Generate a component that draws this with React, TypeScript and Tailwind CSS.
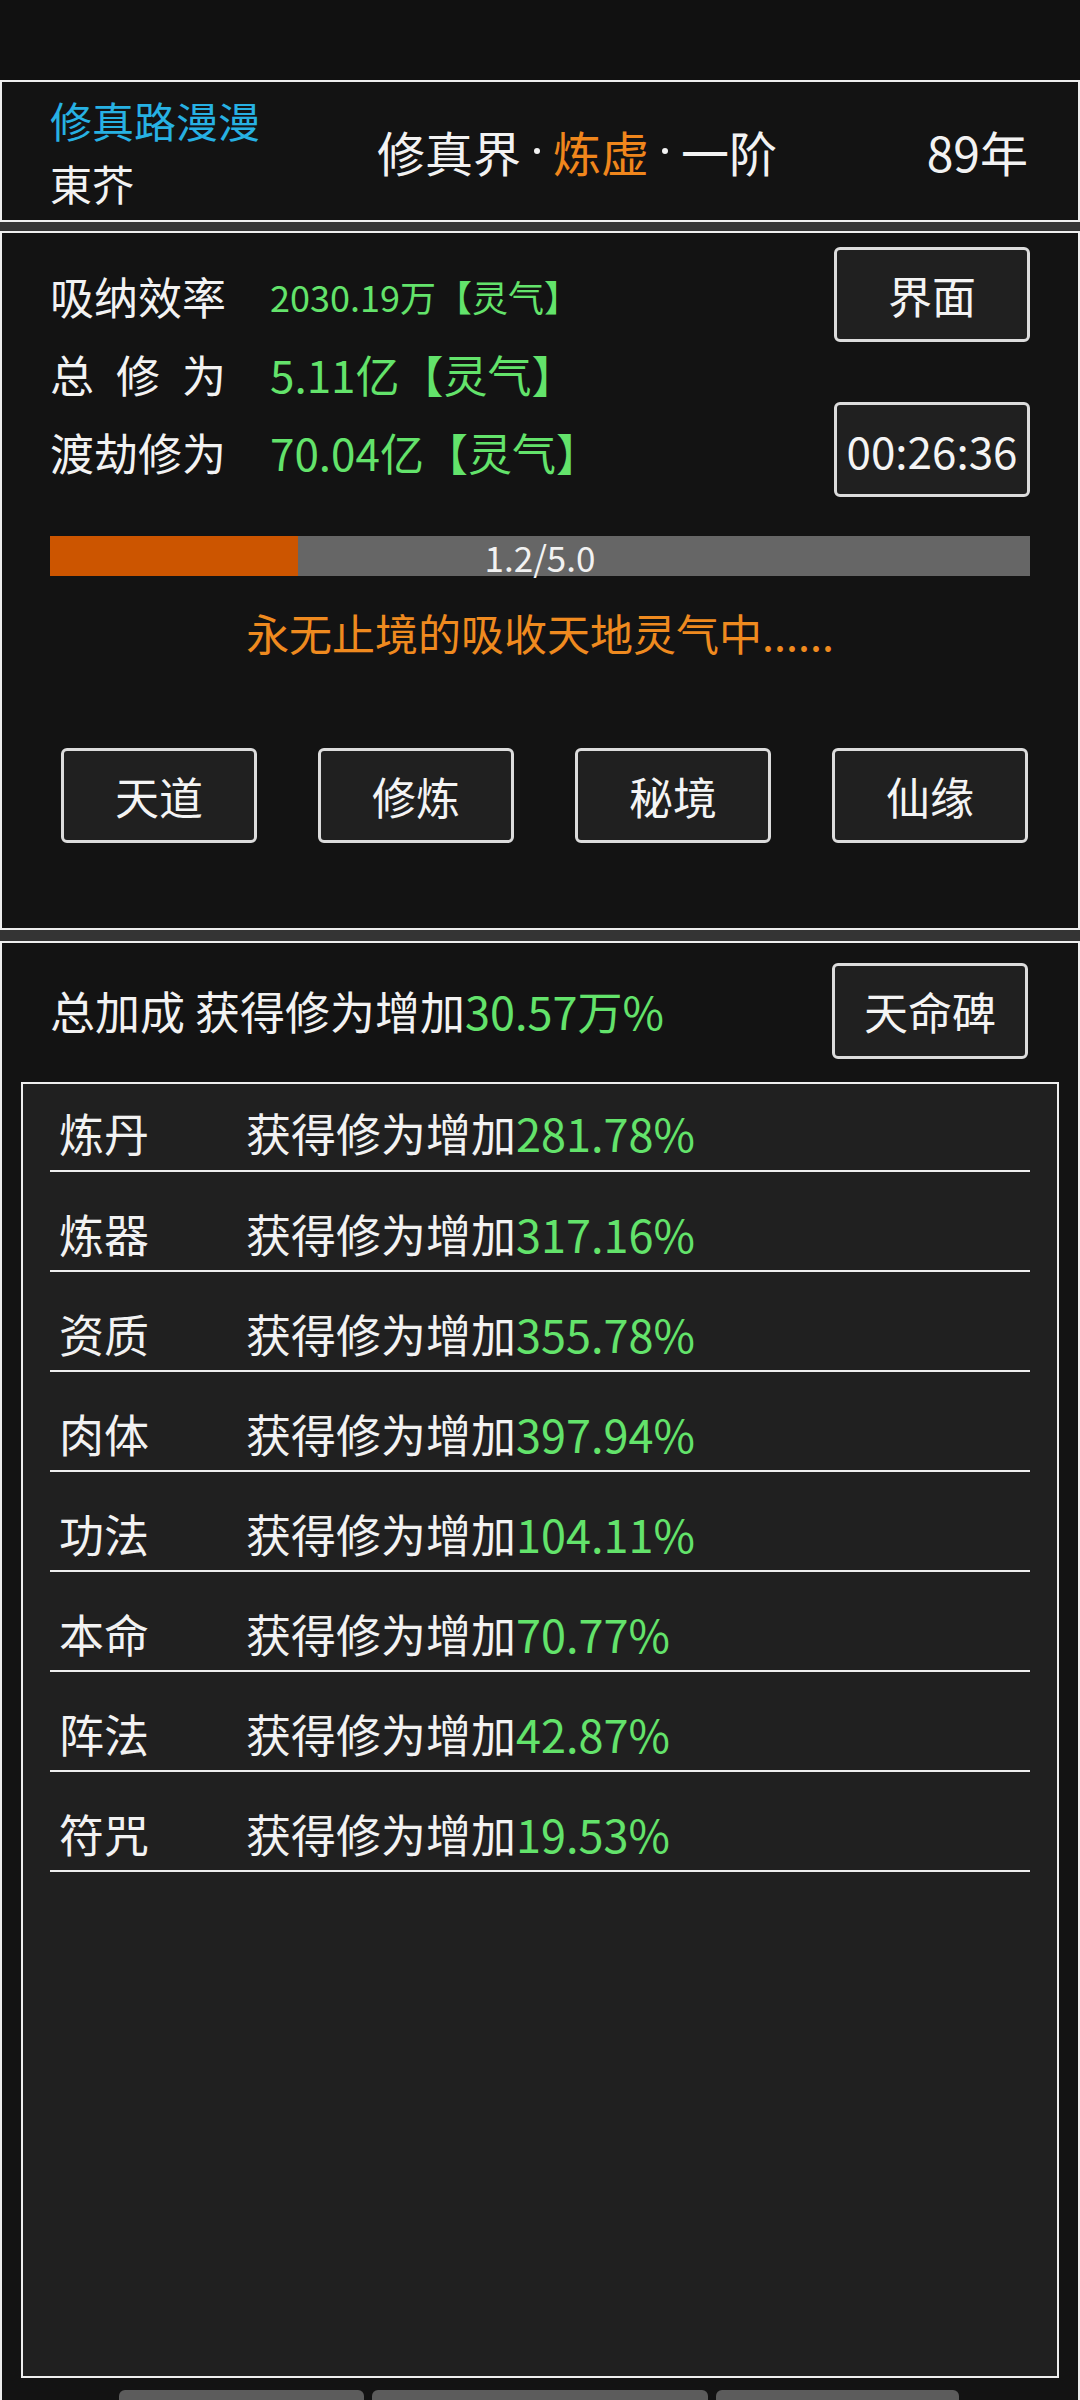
const bonusRows = [
  { name: '炼丹', value: '281.78%' },
  { name: '炼器', value: '317.16%' },
  { name: '资质', value: '355.78%' },
  { name: '肉体', value: '397.94%' },
  { name: '功法', value: '104.11%' },
  { name: '本命', value: '70.77%' },
  { name: '阵法', value: '42.87%' },
  { name: '符咒', value: '19.53%' },
]

const actions = ['天道', '修炼', '秘境', '仙缘']

const Box = ({ children, className = '' }: { children: React.ReactNode; className?: string }) => (
  <div
    className={`flex items-center justify-center rounded-[6px] border-[3px] border-[#dcdcdc] bg-[#202020] text-[44px] text-[#f4f4f4] ${className}`}
  >
    {children}
  </div>
)

export default function App() {
  return (
    <div className="flex h-[2400px] w-[1080px] flex-col overflow-hidden bg-[#111111] font-['Noto_Sans_CJK_SC','Noto_Sans',sans-serif] text-[#f2f2f2]">
      {/* status bar */}
      <div className="h-[80px] shrink-0" />

      {/* header */}
      <div className="flex h-[142px] shrink-0 items-center border-2 border-[#eeeeee] bg-[#131313] pl-[48px] pr-[50px]">
        <div className="w-[327px] text-[42px] leading-[63px]">
          <div className="text-[#27b1e3]">修真路漫漫</div>
          <div>東芥</div>
        </div>
        <div className="flex items-center text-[48px] leading-[60px]">
          <span>修真界</span>
          <span className="flex w-[32px] justify-center">
            <span className="h-[6px] w-[6px] rounded-full bg-[#f2f2f2]" />
          </span>
          <span className="text-[#f0861c]">炼虚</span>
          <span className="flex w-[32px] justify-center">
            <span className="h-[6px] w-[6px] rounded-full bg-[#f2f2f2]" />
          </span>
          <span>一阶</span>
        </div>
        <div className="flex-1 text-right text-[48px] leading-[60px]">89年</div>
      </div>

      <div className="h-[9px] shrink-0 bg-[#343434]" />

      {/* cultivation panel */}
      <div className="shrink-0 border-2 border-[#eeeeee] bg-[#131313] pb-[85px] pl-[48px] pr-[48px] pt-[14px]">
        <div className="flex justify-between">
          <div className="flex flex-col pt-[10px] text-[44px]">
            <div className="flex h-[78px] items-center">
              <span className="w-[220px]">吸纳效率</span>
              <span className="text-[36px] text-[#63e36b]">2030.19万【灵气】</span>
            </div>
            <div className="flex h-[78px] items-center">
              <span className="flex w-[176px] justify-between">
                <span>总</span>
                <span>修</span>
                <span>为</span>
              </span>
              <span className="ml-[44px] text-[#63e36b]">5.11亿【灵气】</span>
            </div>
            <div className="flex h-[78px] items-center">
              <span className="w-[220px]">渡劫修为</span>
              <span className="text-[#63e36b]">70.04亿【灵气】</span>
            </div>
          </div>
          <div className="flex flex-col gap-[60px]">
            <Box className="h-[95px] w-[196px]">界面</Box>
            <Box className="h-[95px] w-[196px]">00:26:36</Box>
          </div>
        </div>

        <div className="relative mt-[39px] h-[40px] w-full bg-[#666666]">
          <div className="h-full w-[25.3%] bg-[#cc5500]" />
          <div className="absolute inset-0 flex items-center justify-center text-[35px] leading-none text-[#f2f2f2]">
            1.2/5.0
          </div>
        </div>

        <div className="mt-[26px] text-center text-[43px] leading-[60px] text-[#ef8a1f]">
          永无止境的吸收天地灵气中......
        </div>

        <div className="mt-[86px] flex justify-between pl-[11px] pr-[2px]">
          {actions.map((a) => (
            <Box key={a} className="h-[95px] w-[196px]">
              {a}
            </Box>
          ))}
        </div>
      </div>

      <div className="h-[11px] shrink-0 bg-[#343434]" />

      {/* bonus panel */}
      <div className="flex-1 border-x-2 border-t-2 border-[#eeeeee] bg-[#131313]">
        <div className="mt-[20px] flex h-[96px] items-center justify-between pl-[48px] pr-[50px]">
          <div className="text-[45px]">
            总加成 获得修为增加<span className="text-[#63e36b]">30.57万%</span>
          </div>
          <Box className="h-[96px] w-[196px]">天命碑</Box>
        </div>

        <div className="mx-[19px] mt-[23px] h-[1296px] border-2 border-[#eeeeee] bg-[#202020] px-[27px]">
          {bonusRows.map((r, i) => (
            <div
              key={r.name}
              className={`flex items-center border-b-2 border-[#eeeeee] pl-[9px] text-[45px] ${
                i === 0 ? 'h-[88px] pt-[12px]' : 'h-[100px] pt-[26px]'
              }`}
            >
              <span className="w-[187px]">{r.name}</span>
              <span>
                获得修为增加<span className="text-[#63e36b]">{r.value}</span>
              </span>
            </div>
          ))}
        </div>

        <div className="mt-[12px] flex gap-[8px] pl-[117px]">
          <div className="h-[20px] w-[245px] rounded-t-[6px] bg-[#5c5c5c]" />
          <div className="h-[20px] w-[336px] rounded-t-[6px] bg-[#5c5c5c]" />
          <div className="h-[20px] w-[243px] rounded-t-[6px] bg-[#5c5c5c]" />
        </div>
      </div>
    </div>
  )
}
